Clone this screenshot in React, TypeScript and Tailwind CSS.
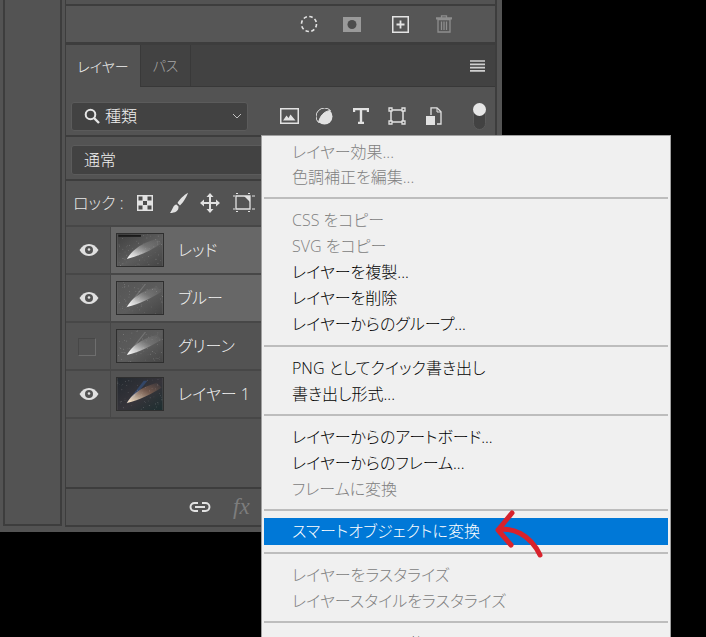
import React from "react";

const font = "font-['Open_Sans','Noto_Sans_CJK_JP',sans-serif] [font-feature-settings:'palt']";

type MenuItem = { label: string; off?: boolean };

function Row({ label, off }: MenuItem) {
  return (
    <div className={`h-[26px] pl-[30px] text-[16px] leading-[26px] whitespace-nowrap ${off ? "text-[#808080]" : "text-black"}`}>
      {label}
    </div>
  );
}

function Sep({ className = "" }: { className?: string }) {
  return <div className={`h-[2px] mx-[2px] mt-[7px] mb-[8px] bg-[#bdbdbd] ${className}`} />;
}

function ContextMenu() {
  return (
    <div className={`absolute left-[261px] top-[135px] w-[410px] h-[502px] overflow-hidden bg-[#f0f0f0] border border-[#a0a0a0] border-b-0 font-light ${font}`}>
      <div className="pt-[4px]">
        <div className="h-[25px] pl-[30px] text-[16px] leading-[25px] text-[#808080]">レイヤー効果...</div>
        <div className="h-[25px] pl-[30px] text-[16px] leading-[25px] text-[#808080]">色調補正を編集...</div>
      </div>
      <Sep />
      <div className="pb-px">
        <Row label="CSS をコピー" off />
        <Row label="SVG をコピー" off />
        <Row label="レイヤーを複製..." />
        <Row label="レイヤーを削除" />
        <Row label="レイヤーからのグループ..." />
      </div>
      <Sep />
      <Row label="PNG としてクイック書き出し" />
      <Row label="書き出し形式..." />
      <Sep />
      <Row label="レイヤーからのアートボード..." />
      <Row label="レイヤーからのフレーム..." />
      <Row label="フレームに変換" off />
      <Sep className="!mb-[7px]" />
      <div className="h-[27px] mx-[2px] pl-[28px] bg-[#0078d7] text-white text-[16px] leading-[27px]">スマートオブジェクトに変換</div>
      <Sep />
      <Row label="レイヤーをラスタライズ" off />
      <Row label="レイヤースタイルをラスタライズ" off />
      <Sep />
      <Row label="レイヤーマスクを使用" />
    </div>
  );
}

function Eye() {
  return (
    <svg width="20" height="14" viewBox="0 0 20 14" className="ml-[2px]">
      <path d="M0.5 7C3 3 6 1 10 1s7 2 9.5 6c-2.500 4-5.500 6-9.500 6S3 11 .5 7z" fill="#e0e0e0" />
      <circle cx="10" cy="7" r="4" fill="#535353" />
      <circle cx="10" cy="6.500" r="1.300" fill="#e0e0e0" />
    </svg>
  );
}

// small pseudo random star field for the thumbnails
function stars(seed: number, count: number) {
  const out: { x: number; y: number; o: number }[] = [];
  let s = seed;
  const next = () => {
    s = (s * 16807) % 2147483647;
    return s / 2147483647;
  };
  for (let i = 0; i < count; i++) {
    out.push({ x: next() * 48, y: next() * 34, o: 0.1 + next() * 0.35 });
  }
  return out;
}

function Thumb({ id, kind }: { id: string; kind: "red" | "blue" | "green" | "color" }) {
  const isColor = kind === "color";
  const head = isColor ? "#ffe6c8" : "#ffffff";
  const tail = isColor ? "#b57f60" : "#8f8f8f";
  return (
    <svg width="48" height="34" viewBox="0 0 48 34" className="shrink-0 border border-[#2f2f2f] box-border">
      <defs>
        <linearGradient id={`bg-${id}`} x1="0" y1="0" x2="1" y2="1">
          <stop offset="0" stopColor={isColor ? "#23292f" : kind === "red" ? "#404040" : "#555555"} />
          <stop offset="0.55" stopColor={isColor ? "#36343a" : "#5c5c5c"} />
          <stop offset="1" stopColor={isColor ? "#1d2e30" : "#454545"} />
        </linearGradient>
        <linearGradient id={`tail-${id}`} x1="0" y1="1" x2="1" y2="0">
          <stop offset="0" stopColor={head} />
          <stop offset="0.25" stopColor={head} stopOpacity="0.7" />
          <stop offset="0.6" stopColor={tail} stopOpacity="0.45" />
          <stop offset="1" stopColor={tail} stopOpacity="0" />
        </linearGradient>
      </defs>
      <rect width="48" height="34" fill={`url(#bg-${id})`} />
      {kind === "red" && <rect x="1" y="1" width="24" height="2" fill="#1a1a1a" />}
      {isColor && <path d="M10 26 L28 3 L32 3 L13 26z" fill="#34507c" opacity="0.7" />}
      {(kind === "blue" || kind === "green") && (
        <path d="M10 26 L29 2 L30.500 2 L12 26z" fill="#868686" opacity="0.6" />
      )}
      {stars(id.length * 977 + id.charCodeAt(0) * 31, 60).map((d, i) => (
        <rect key={i} x={d.x} y={d.y} width="0.7" height="0.7" fill="#fff" opacity={d.o} />
      ))}
      <path d="M10 26.500 C15 18 24 10 42 5 L47 10 C36 17 24 23 10 26.500z" fill={`url(#tail-${id})`} />
    </svg>
  );
}

function LayerRow({ id, name, kind, shown, selected }: { id: string; name: string; kind: "red" | "blue" | "green" | "color"; shown: boolean; selected?: boolean }) {
  return (
    <div className="flex h-[48px] border-b-2 border-[#474747]">
      <div className="w-[45px] flex items-center justify-center border-r border-[#474747]">
        {shown ? <Eye /> : <div className="w-[18px] h-[18px] mr-[2px] mt-px border-r border-b border-[#6e6e6e] border-l border-t border-l-[#474747] border-t-[#474747]" />}
      </div>
      <div className={`flex-1 flex items-center pl-[5px] ${selected ? "bg-[#676767]" : ""}`}>
        <Thumb id={id} kind={kind} />
        <span className={`ml-[14px] text-[16px] font-light text-[#f2f2f2] ${font}`}>{name}</span>
      </div>
    </div>
  );
}

export default function App() {
  return (
    <div className="relative w-[706px] h-[637px] bg-black overflow-hidden">
      <div className={`flex w-[502px] h-[532px] bg-[#535353] ${font}`}>
        {/* far left strip */}
        <div className="ml-[3px] w-[59px] h-[526px] border-x-2 border-b-2 border-[#3d3d3d]" />

        <div className="ml-[3px] w-[432px] h-[527px] flex flex-col border-r-2 border-b-2 border-[#3d3d3d] border-l border-l-[#3d3d3d]">
          <div className="h-[6px] border-b-2 border-[#3d3d3d]" />

          {/* layer comps toolbar */}
          <div className="h-[39px] shrink-0 flex items-center border-b-[3px] border-[#3d3d3d] bg-[#565656]">
            <svg width="18" height="18" viewBox="0 0 18 18" className="ml-[234px]">
              <circle cx="9" cy="9" r="7.500" fill="none" stroke="#e4e4e4" strokeWidth="1.600" strokeDasharray="3.500 2.400" />
            </svg>
            <svg width="18" height="15" viewBox="0 0 18 15" className="ml-[25px]">
              <rect width="18" height="15" fill="#9a9a9a" />
              <circle cx="9" cy="7.500" r="4.500" fill="#4c4c4c" />
            </svg>
            <svg width="17" height="17" viewBox="0 0 17 17" className="ml-[31px]">
              <rect x="0.750" y="0.750" width="15.500" height="15.500" fill="none" stroke="#e4e4e4" strokeWidth="1.500" />
              <path d="M8.500 4.500v8M4.500 8.500h8" stroke="#e4e4e4" strokeWidth="1.800" />
            </svg>
            <svg width="16" height="18" viewBox="0 0 16 18" className="ml-[27px]">
              <path d="M5.500 2.500V.8h5v1.700M.5 3h15v.8H.5zM2 4.500h12V17H2zM5.500 6.500v8.500M8 6.500v8.500M10.500 6.500v8.500" fill="none" stroke="#8e8e8e" strokeWidth="1.300" />
            </svg>
          </div>

          {/* tabs */}
          <div className="h-[42px] shrink-0 flex bg-[#424242] border-b border-[#383838]">
            <div className="w-[74px] h-[42px] flex items-center justify-center bg-[#535353] text-[14px] font-light text-[#f0f0f0]">レイヤー</div>
            <div className="w-[51px] flex items-center justify-center border-x border-[#393939] text-[14px] font-light text-[#a8a8a8]">パス</div>
            <svg width="15" height="12" viewBox="0 0 15 12" className="ml-auto mr-[10px] mt-[15px]">
              <path d="M0 1h15M0 4.300h15M0 7.600h15M0 10.900h15" stroke="#cfcfcf" strokeWidth="1.700" />
            </svg>
          </div>

          {/* filter row */}
          <div className="h-[50px] shrink-0 flex items-center pl-[5px] border-b-2 border-[#3d3d3d]">
            <div className="w-[177px] h-[29px] mt-[10px] flex items-center bg-[#424242] border border-[#5b5b5b] rounded-[3px]">
              <svg width="16" height="16" viewBox="0 0 16 16" className="ml-[12px]">
                <circle cx="6.500" cy="6.500" r="4.800" fill="none" stroke="#e6e6e6" strokeWidth="2" />
                <path d="M10 10l5 5" stroke="#e6e6e6" strokeWidth="2.400" />
              </svg>
              <span className="ml-[5px] text-[16px] font-light text-[#f0f0f0]">種類</span>
              <svg width="10" height="6" viewBox="0 0 10 6" className="ml-auto mr-[5px]">
                <path d="M1 1l4 4 4-4" fill="none" stroke="#c0c0c0" />
              </svg>
            </div>
            <div className="flex items-center mt-[10px]">
              <svg width="19" height="16" viewBox="0 0 19 16" className="ml-[32px]">
                <rect x="0.750" y="0.750" width="17.500" height="14.500" fill="none" stroke="#e2e2e2" strokeWidth="1.500" />
                <path d="M3 12.500l3.500-5 2 2.500 2-3.500 5 6z" fill="#e2e2e2" />
              </svg>
              <svg width="17" height="17" viewBox="0 0 17 17" className="ml-[17px]">
                <circle cx="8.500" cy="8.500" r="8" fill="#e2e2e2" />
                <path d="M2.500 14.500A8 8 0 0 1 14.500 2.500C8 3 4 8 2.500 14.500z" fill="#535353" stroke="#e2e2e2" />
              </svg>
              <svg width="16" height="16" viewBox="0 0 16 16" className="ml-[20px]">
                <path d="M1 4V1h14v3M8 1v14M5 15h6" fill="none" stroke="#e2e2e2" strokeWidth="2.400" />
              </svg>
              <svg width="18" height="18" viewBox="0 0 18 18" className="ml-[19px]">
                <path d="M3 3h12v12H3z" fill="none" stroke="#e2e2e2" strokeWidth="1.500" />
                <path d="M1 1h3v3H1zM14 1h3v3h-3zM1 14h3v3H1zM14 14h3v3h-3z" fill="#535353" stroke="#e2e2e2" strokeWidth="1.300" />
              </svg>
              <svg width="16" height="18" viewBox="0 0 16 18" className="ml-[20px]">
                <path d="M5 8V.8h6l4 4V17h-4" fill="none" stroke="#e2e2e2" strokeWidth="1.300" />
                <path d="M11 1v4h4" fill="none" stroke="#e2e2e2" />
                <rect x="0" y="9" width="9" height="9" fill="#e2e2e2" />
              </svg>
              <div className="ml-[31px] w-[13px] h-[27px] rounded-full bg-[#424242] border border-[#5b5b5b] relative">
                <div className="absolute -left-px -top-px w-[13px] h-[13px] rounded-full bg-[#e6e6e6]" />
              </div>
            </div>
          </div>

          {/* blend mode */}
          <div className="h-[44px] shrink-0 flex items-center pl-[5px] border-b-2 border-[#3d3d3d]">
            <div className="w-[300px] h-[30px] mt-[4px] flex items-center pl-[12px] bg-[#424242] border border-[#5b5b5b] rounded-[3px] text-[16px] font-light text-[#f0f0f0]">通常</div>
          </div>

          {/* lock row */}
          <div className="h-[46px] shrink-0 flex items-center pl-[7px] border-b-2 border-[#474747]">
            <span className="text-[16px] font-light text-[#e8e8e8] w-[54px] whitespace-nowrap">ロック :</span>
            <svg width="16" height="16" viewBox="0 0 16 16" className="ml-[10px]">
              <rect width="16" height="16" fill="#e2e2e2" />
              <path d="M1.500 1.500h4v4h-4zM10.500 1.500h4v4h-4zM6 6h4v4H6zM1.500 10.500h4v4h-4zM10.500 10.500h4v4h-4z" fill="#4c4c4c" />
            </svg>
            <svg width="20" height="22" viewBox="0 0 20 22" className="ml-[16px]">
              <path d="M19 .8C15 3 10 8 8.500 11l2.500 2.500C14 11 17.500 5 19 .8zM7.500 12.500C4 13 4 17 1 21c5 0 9-2 8.500-6.500z" fill="#e2e2e2" />
            </svg>
            <svg width="20" height="20" viewBox="0 0 20 20" className="ml-[11px]">
              <path d="M10 0l3.500 4h-2.500v5h5V6.500l4 3.500-4 3.500V11h-5v5h2.500L10 20l-3.500-4H9v-5H4v2.500L0 10l4-3.500V9h5V4H6.500z" fill="#e2e2e2" />
            </svg>
            <svg width="22" height="20" viewBox="0 0 22 20" className="ml-[13px]">
              <path d="M3 3h14v13H3z" fill="none" stroke="#e2e2e2" strokeWidth="1.300" />
              <path d="M11 3h6v6z" fill="#e2e2e2" />
              <path d="M0 3h2M19 3h3M19 16h3M0 16h2M3 18.500h2M15 18.500h2M3 .5h2M15 .5h2" stroke="#e2e2e2" />
            </svg>
          </div>

          <LayerRow id="r" name="レッド" kind="red" shown selected />
          <LayerRow id="bl" name="ブルー" kind="blue" shown selected />
          <LayerRow id="grn" name="グリーン" kind="green" shown={false} />
          <LayerRow id="colo" name="レイヤー 1" kind="color" shown />

          <div className="flex-1 border-b-2 border-[#3d3d3d]" />

          {/* footer */}
          <div className="h-[36px] shrink-0 flex items-center">
            <svg width="22" height="12" viewBox="0 0 22 12" className="ml-[123px]">
              <path d="M9 2H5.500a4 4 0 0 0 0 8H9M13 2h3.500a4 4 0 0 1 0 8H13M6 6h10" fill="none" stroke="#e2e2e2" strokeWidth="1.900" />
            </svg>
            <span className="ml-[22px] font-['Liberation_Serif',serif] italic text-[23px] text-[#7d7d7d]">fx</span>
          </div>
        </div>
      </div>

      <ContextMenu />

      {/* red hand drawn arrow */}
      <svg width="60" height="60" viewBox="0 0 60 60" className="absolute left-[490px] top-[506px]">
        <path d="M22 7L8 24l13 15M8 24c14-3 32 4 42 25" fill="none" stroke="#d8222c" strokeWidth="5" strokeLinecap="round" strokeLinejoin="round" />
      </svg>
    </div>
  );
}
